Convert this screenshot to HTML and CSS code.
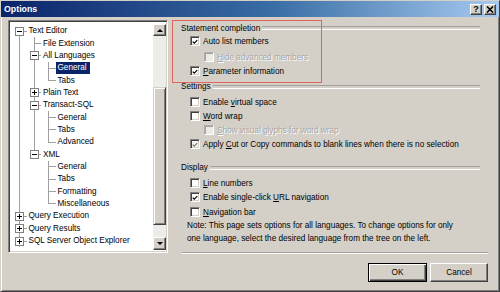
FILE: index.html
```html
<!DOCTYPE html>
<html>
<head>
<meta charset="utf-8">
<link rel="stylesheet" href="styles.css">
</head>
<body>
<div class="window">
  <div class="titlebar">
    <span class="title">Options</span>
    <div class="tb-btns">
      <span class="tb-btn q">?</span>
      <span class="tb-btn"><svg width="8" height="7" viewBox="0 0 8 7"><path d="M1 0.5 L7 6.5 M7 0.5 L1 6.5" stroke="#000" stroke-width="1.6"/></svg></span>
    </div>
  </div>
  <div class="content">
    <div class="main">
      <div class="tree">
        <div class="items">
          <div class="row"><span class="cell c-top"><span class="exp minus"></span></span><span class="lbl">Text Editor</span></div>
          <div class="row"><span class="cell c-v"></span><span class="cell c-t"></span><span class="lbl">File Extension</span></div>
          <div class="row"><span class="cell c-v"></span><span class="cell c-t"><span class="exp minus"></span></span><span class="lbl">All Languages</span></div>
          <div class="row"><span class="cell c-v"></span><span class="cell c-v"></span><span class="cell c-t"></span><span class="lbl sel">General</span></div>
          <div class="row"><span class="cell c-v"></span><span class="cell c-v"></span><span class="cell c-l"></span><span class="lbl">Tabs</span></div>
          <div class="row"><span class="cell c-v"></span><span class="cell c-t"><span class="exp plus"></span></span><span class="lbl">Plain Text</span></div>
          <div class="row"><span class="cell c-v"></span><span class="cell c-t"><span class="exp minus"></span></span><span class="lbl">Transact-SQL</span></div>
          <div class="row"><span class="cell c-v"></span><span class="cell c-v"></span><span class="cell c-t"></span><span class="lbl">General</span></div>
          <div class="row"><span class="cell c-v"></span><span class="cell c-v"></span><span class="cell c-t"></span><span class="lbl">Tabs</span></div>
          <div class="row"><span class="cell c-v"></span><span class="cell c-v"></span><span class="cell c-l"></span><span class="lbl">Advanced</span></div>
          <div class="row"><span class="cell c-v"></span><span class="cell c-l"><span class="exp minus"></span></span><span class="lbl">XML</span></div>
          <div class="row"><span class="cell c-v"></span><span class="cell c-b"></span><span class="cell c-t"></span><span class="lbl">General</span></div>
          <div class="row"><span class="cell c-v"></span><span class="cell c-b"></span><span class="cell c-t"></span><span class="lbl">Tabs</span></div>
          <div class="row"><span class="cell c-v"></span><span class="cell c-b"></span><span class="cell c-t"></span><span class="lbl">Formatting</span></div>
          <div class="row"><span class="cell c-v"></span><span class="cell c-b"></span><span class="cell c-l"></span><span class="lbl">Miscellaneous</span></div>
          <div class="row"><span class="cell c-t"><span class="exp plus"></span></span><span class="lbl">Query Execution</span></div>
          <div class="row"><span class="cell c-t"><span class="exp plus"></span></span><span class="lbl">Query Results</span></div>
          <div class="row"><span class="cell c-t"><span class="exp plus"></span></span><span class="lbl">SQL Server Object Explorer</span></div>
        </div>
        <div class="scrollbar">
          <span class="sb-btn"><span class="arr up"></span></span>
          <span class="track t1"></span>
          <span class="thumb"></span>
          <span class="track t2"></span>
          <span class="sb-btn"><span class="arr down"></span></span>
        </div>
      </div>
      <div class="panel">
        <div class="annot"></div>
        <div class="group-h first"><span>Statement completion</span></div>
        <div class="cb"><span class="box on"><svg viewBox="0 0 8 8"><path d="M1 3.6 L3 5.6 L7 1.6" fill="none" stroke="#000" stroke-width="1.6"/></svg></span><span>Auto list members</span></div>
        <div class="cb l2 dis sp"><span class="box"></span><span class="t"><u>H</u>ide advanced members</span></div>
        <div class="cb"><span class="box on"><svg viewBox="0 0 8 8"><path d="M1 3.6 L3 5.6 L7 1.6" fill="none" stroke="#000" stroke-width="1.6"/></svg></span><span><u>P</u>arameter information</span></div>
        <div class="group-h sp"><span>Settings</span></div>
        <div class="cb sp"><span class="box"></span><span>Enable <u>v</u>irtual space</span></div>
        <div class="cb"><span class="box"></span><span><u>W</u>ord wrap</span></div>
        <div class="cb l2 dis"><span class="box"></span><span class="t"><u>S</u>how visual glyphs for word wrap</span></div>
        <div class="cb"><span class="box on light"><svg viewBox="0 0 8 8"><path d="M1 3.6 L3 5.6 L7 1.6" fill="none" stroke="#707070" stroke-width="1.4"/></svg></span><span>Apply <u>C</u>ut or Copy commands to blank lines when there is no selection</span></div>
        <div class="group-h disp"><span>Display</span></div>
        <div class="cb sp"><span class="box"></span><span><u>L</u>ine numbers</span></div>
        <div class="cb"><span class="box on"><svg viewBox="0 0 8 8"><path d="M1 3.6 L3 5.6 L7 1.6" fill="none" stroke="#000" stroke-width="1.6"/></svg></span><span>Enable single-click <u>U</u>RL navigation</span></div>
        <div class="cb sp1"><span class="box"></span><span><u>N</u>avigation bar</span></div>
        <p class="note">Note: This page sets options for all languages. To change options for only one language, select the desired language from the tree on the left.</p>
        <div class="sep"></div>
      </div>
    </div>
    <div class="buttons">
      <span class="btn default">OK</span>
      <span class="btn">Cancel</span>
    </div>
  </div>
</div>
</body>
</html>
```

FILE: styles.css
```css
* { box-sizing: border-box; }
html, body { margin: 0; padding: 0; }
body {
  width: 500px;
  height: 292px;
  overflow: hidden;
  background: #d4d0c8;
  font-family: "Liberation Sans", Arial, sans-serif;
  font-size: 8.2px;
  color: #000;
}
.window {
  width: 500px;
  height: 292px;
  border: 1px solid;
  border-color: #d4d0c8 #404040 #404040 #d4d0c8;
  box-shadow: inset 1px 1px #fff, inset -1px -1px #808080;
  display: flex;
  flex-direction: column;
}
.titlebar {
  height: 16px;
  background: linear-gradient(to right, #0a246a, #3a6ea5 55%, #a6caf0);
  display: flex;
  align-items: center;
  justify-content: space-between;
  padding: 0 3px 0 3px;
}
.title {
  color: #fff;
  font-weight: bold;
  font-size: 8.8px;
}
.tb-btns { display: flex; gap: 2px; }
.tb-btn {
  width: 12px;
  height: 11px;
  background: #d4d0c8;
  border: 1px solid;
  border-color: #fff #404040 #404040 #fff;
  box-shadow: inset -1px -1px #808080;
  display: flex;
  align-items: center;
  justify-content: center;
  font-weight: bold;
  font-size: 9px;
  line-height: 1;
}
.content {
  flex: 1;
  display: flex;
  flex-direction: column;
  padding: 3px 11px 0 7px;
}
.main { display: flex; }
.tree {
  width: 160px;
  height: 233px;
  flex: none;
  background: #fff;
  border: 1px solid;
  border-color: #808080 #fff #fff #808080;
  box-shadow: inset 1px 1px #404040, inset -1px -1px #d4d0c8;
  padding: 1px;
  display: flex;
}
.items {
  flex: 1;
  padding: 3px 0 0 2px;
}
.row {
  height: 12.35px;
  display: flex;
  align-items: center;
  white-space: nowrap;
}
.cell {
  width: 14.5px;
  height: 100%;
  flex: none;
  display: flex;
  align-items: center;
}
.c-v { background: linear-gradient(#a0a0a0, #a0a0a0) 7px 0 / 1px 100% no-repeat; }
.c-t {
  background:
    linear-gradient(#a0a0a0, #a0a0a0) 7px 0 / 1px 100% no-repeat,
    linear-gradient(#a0a0a0, #a0a0a0) 7px 50% / 8px 1px no-repeat;
}
.c-l {
  background:
    linear-gradient(#a0a0a0, #a0a0a0) 7px 0 / 1px 50% no-repeat,
    linear-gradient(#a0a0a0, #a0a0a0) 7px 50% / 8px 1px no-repeat;
}
.c-top {
  background:
    linear-gradient(#a0a0a0, #a0a0a0) 7px 100% / 1px 50% no-repeat,
    linear-gradient(#a0a0a0, #a0a0a0) 7px 50% / 8px 1px no-repeat;
}
.exp {
  width: 9px;
  height: 9px;
  margin-left: 3px;
  border: 1px solid #808080;
}
.minus { background: linear-gradient(#000, #000) center / 5px 1px no-repeat, #fff; }
.plus {
  background:
    linear-gradient(#000, #000) center / 5px 1px no-repeat,
    linear-gradient(#000, #000) center / 1px 5px no-repeat,
    #fff;
}
.lbl {
  padding: 0 2px;
  margin-left: 0;
  line-height: 12px;
}
.sel {
  background: #0a246a;
  color: #fff;
  padding: 0 3px 0 2px;
}
.scrollbar {
  width: 13px;
  flex: none;
  margin: 2px 0 1px;
  display: flex;
  flex-direction: column;
}
.sb-btn {
  height: 12px;
  flex: none;
  background: #d4d0c8;
  border: 1px solid;
  border-color: #fff #404040 #404040 #fff;
  box-shadow: inset -1px -1px #808080;
  display: flex;
  align-items: center;
  justify-content: center;
}
.sb-btn:last-child { height: 13px; }
.arr { width: 0; height: 0; border-left: 3px solid transparent; border-right: 3px solid transparent; }
.up { border-bottom: 3px solid #000; }
.down { border-top: 3px solid #000; }
.track { background: #eeece8; flex: none; }
.t1 { height: 51px; }
.t2 { height: 12px; }
.thumb {
  height: 138px;
  flex: none;
  background: #d4d0c8;
  border: 1px solid;
  border-color: #d4d0c8 #404040 #404040 #d4d0c8;
  box-shadow: inset 1px 1px #fff, inset -1px -1px #808080;
}
.panel {
  flex: 1;
  margin-left: 8px;
  padding-top: 2px;
  position: relative;
}
.annot {
  position: absolute;
  left: -4px;
  top: 0;
  width: 150px;
  height: 63px;
  border: 1px solid #e2625e;
}
.group-h {
  height: 12px;
  display: flex;
  align-items: center;
  padding-left: 5px;
  margin-right: 8px;
  white-space: nowrap;
}
.group-h::after {
  content: "";
  flex: 1;
  height: 2px;
  margin-left: 2px;
  border-top: 1px solid #a0a0a0;
  border-bottom: 1px solid #fff;
}
.group-h.sp { height: 13px; margin-top: 2px; }
.group-h.disp { height: 13px; margin-top: 10px; }
.cb {
  height: 14px;
  display: flex;
  align-items: center;
  padding-left: 14px;
  white-space: nowrap;
}
.cb.sp { margin-top: 2px; }
.cb.sp1 { margin-top: 1px; }
.cb.l2 { padding-left: 28px; }
.box {
  width: 10px;
  height: 10px;
  flex: none;
  margin-right: 3px;
  background: #fff;
  border: 1px solid;
  border-color: #808080 #fff #fff #808080;
  box-shadow: inset 1px 1px #404040, inset -1px -1px #d4d0c8;
  padding: 1px;
  display: flex;
}
.box svg { width: 8px; height: 8px; display: block; }
.box.light { background: #f4f3f0; }
.dis .box {
  background: #eceae5;
  border-color: #b0b0b0 #fff #fff #b0b0b0;
  box-shadow: inset 1px 1px #a0a0a0;
}
.dis .t { color: #a6a6a6; text-shadow: 1px 1px #fff; }
.note {
  margin: 0;
  padding: 0 22px 0 11px;
  line-height: 13px;
}
.sep {
  height: 2px;
  margin: 7px 0 0 6px;
  border-top: 1px solid #a0a0a0;
  border-bottom: 1px solid #fff;
}
.buttons {
  display: flex;
  justify-content: flex-end;
  gap: 3px;
  margin-top: 9px;
}
.btn {
  height: 19px;
  width: 58px;
  display: flex;
  align-items: center;
  justify-content: center;
  background: #d4d0c8;
  border: 1px solid;
  border-color: #fff #404040 #404040 #fff;
  box-shadow: inset -1px -1px #808080;
}
.btn.default {
  width: 59px;
  border: 1px solid #000;
  box-shadow: inset 1px 1px #fff, inset -1px -1px #404040, inset -2px -2px #808080;
}
```
